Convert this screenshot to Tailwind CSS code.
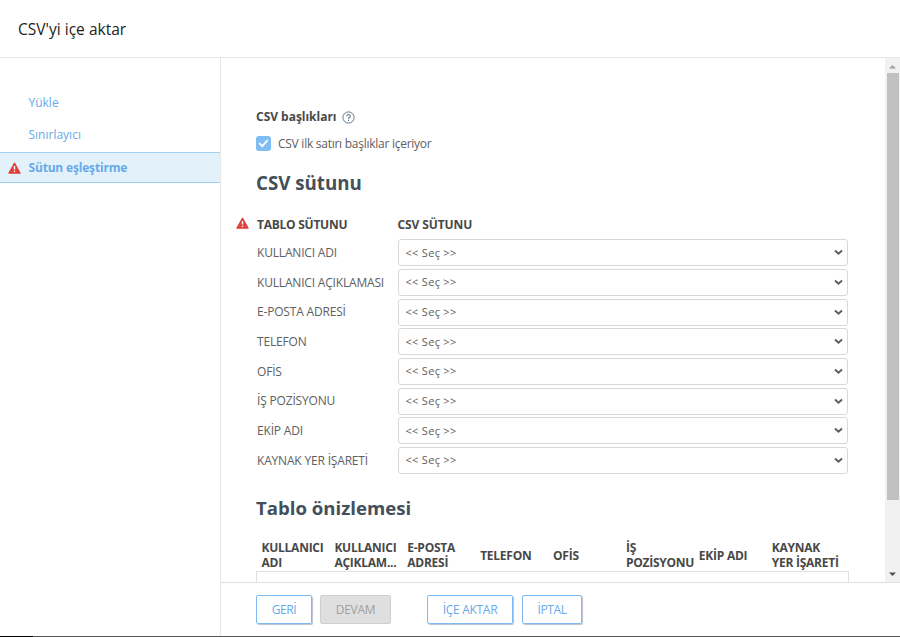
<!DOCTYPE html>
<html lang="tr">
<head>
  <meta charset="UTF-8" />
  <title>CSV'yi içe aktar</title>
  <meta name="viewport" content="width=device-width, initial-scale=1.0" />
  <script src="https://cdn.jsdelivr.net/npm/@tailwindcss/browser@4"></script>
</head>
<body class="h-screen overflow-hidden bg-white font-['Open_Sans','Noto_Sans',sans-serif] text-[12px] text-[#606060] flex flex-col">
  <header class="h-[58px] shrink-0 border-b border-[#e6e6e6] flex items-center pl-[18px]">
    <h1 class="text-[15.5px] leading-5 text-[#222] tracking-[0.02px]">CSV'yi içe aktar</h1>
  </header>

  <div class="flex-1 min-h-0 flex">
    <nav class="w-[221px] shrink-0 border-r border-[#e6e6e6] pt-[29px] text-[#68aae9]">
      <a class="flex items-center h-8 pl-[28.5px]">Yükle</a>
      <a class="flex items-center h-8 pl-[28.5px]">Sınırlayıcı</a>
      <a class="flex items-center h-[31px] mt-px pl-2 border-y border-[#9dd0f2] bg-[#e3f1fa] font-bold">
        <svg class="w-[13px] h-3 mr-[7.5px]" viewBox="0 0 13 12"><path d="M6.5.8 12.3 11.2H.7z" fill="#e0403a" stroke="#e0403a" stroke-linejoin="round" /><path d="M6.5 4v3.4M6.5 8.7v1.4" stroke="#fff" stroke-width="1.4" /></svg>
        <span class="tracking-[-0.18px]">Sütun eşleştirme</span>
      </a>
    </nav>

    <div class="flex-1 min-w-0 flex flex-col">
      <div class="flex-1 min-h-0 flex border-b border-[#e0e0e0]">
        <main class="flex-1 min-w-0 overflow-hidden pl-[35px] pt-[50px]">
          <div class="flex items-center h-[18px] font-bold text-[#484848]">
            <span class="tracking-[-0.02px]">CSV başlıkları</span>
            <svg class="w-[13px] h-[13px] ml-[5px]" viewBox="0 0 13 13" fill="none" stroke="#60758c"><circle cx="6.5" cy="6.5" r="5.6" /><path d="M4.8 5.2c0-2.3 3.5-2.2 3.5-.1 0 1.4-1.8 1.3-1.8 2.6M6.5 8.7v1.2" stroke-width="1.1" /></svg>
          </div>
          <label class="flex items-center h-5 mt-[7px]">
            <svg class="w-[15px] h-[15px] mr-[7px]" viewBox="0 0 15 15"><rect width="15" height="15" rx="3" fill="#80bdf5" /><path d="m3.3 7.2 3 3 5.4-6" fill="none" stroke="#fff" stroke-width="1.8" /></svg>
            <span class="pt-0.5 tracking-[-0.26px]">CSV ilk satırı başlıklar içeriyor</span>
          </label>
          <h2 class="mt-[18px] h-6 leading-6 text-[18.7px] font-bold text-[#434f5a]">CSV sütunu</h2>

          <div class="relative flex items-center h-5 mt-[20px] pl-px font-bold text-[#484848]">
            <svg class="absolute -left-5 top-[2px] w-[13px] h-3" viewBox="0 0 13 12"><path d="M6.5.8 12.3 11.2H.7z" fill="#e0403a" stroke="#e0403a" stroke-linejoin="round" /><path d="M6.5 4v3.4M6.5 8.7v1.4" stroke="#fff" stroke-width="1.4" /></svg>
            <span class="w-[140.5px] tracking-[-0.25px]">TABLO SÜTUNU</span>
            <span class="tracking-[-0.1px]">CSV SÜTUNU</span>
          </div>
          <div id="mapping" class="mt-[3px]"></div>

          <h2 class="mt-[20px] h-6 leading-6 text-[18.6px] font-bold text-[#434f5a]">Tablo önizlemesi</h2>
          <div id="preview" class="flex items-center w-[592px] h-[31px] mt-[20px] pl-[5.5px] font-bold text-[#484848] leading-[15px]"></div>
          <div class="w-[593px] h-10 border border-[#e0e0e0]"></div>
        </main>

        <div class="w-[15px] shrink-0 bg-[#f1f1f1] flex flex-col items-center">
          <svg class="w-[15px] h-[15px] shrink-0" viewBox="0 0 15 15"><path d="M4 10.5 7.5 7l3.500 3.500z" fill="#a3a3a3" /></svg>
          <div class="w-3 h-[427px] bg-[#c1c1c1]"></div>
          <svg class="w-[15px] h-[15px] shrink-0 mt-auto" viewBox="0 0 15 15"><path d="M4 5.500h7L7.500 9z" fill="#505050" /></svg>
        </div>
      </div>

      <footer class="h-[53px] shrink-0 flex items-start pt-3 pl-[35px] text-[#68aae9]">
        <button class="w-[56px] h-[29px] border border-[#7dbaf2] rounded-[2px] shadow-[1px_1px_1px_#b8c4d0] tracking-[-0.4px]">GERİ</button>
        <button class="w-[71px] h-[29px] ml-2 border border-[#cfcfcf] rounded-[2px] bg-[#dfdfdf] text-[#a0a0a0] tracking-[-0.3px]">DEVAM</button>
        <button class="w-[86px] h-[29px] ml-9 border border-[#7dbaf2] rounded-[2px] shadow-[1px_1px_1px_#b8c4d0] tracking-[-0.3px]">İÇE AKTAR</button>
        <button class="w-[60px] h-[29px] ml-[9px] border border-[#7dbaf2] rounded-[2px] shadow-[1px_1px_1px_#b8c4d0] tracking-[-0.4px]">İPTAL</button>
      </footer>
    </div>
  </div>
  <div class="h-px shrink-0 bg-[#555] flex"><div class="w-[33px] bg-black"></div></div>

  <script>
    const fields = ["KULLANICI ADI", "KULLANICI AÇIKLAMASI", "E-POSTA ADRESİ", "TELEFON", "OFİS", "İŞ POZİSYONU", "EKİP ADI", "KAYNAK YER İŞARETİ"];
    const headings = ["KULLANICI<br>ADI", "KULLANICI<br>AÇIKLAM...", "E-POSTA<br>ADRESİ", "TELEFON", "OFİS", "İŞ<br>POZİSYONU", "EKİP ADI", "KAYNAK<br>YER İŞARETİ"];

    document.getElementById("mapping").innerHTML = fields.map((name) => `
      <div class="flex items-center h-[29.7px] pl-px">
        <span class="w-[140.5px] whitespace-nowrap tracking-[-0.18px]">${name}</span>
        <div class="flex items-center justify-between w-[450px] h-[27px] pl-[7px] pr-[4px] border border-[#d9d9d9] rounded-[3px] text-[11px]">
          <span class="tracking-[0.3px]">&lt;&lt; Seç &gt;&gt;</span>
          <svg class="w-[9px] h-[7px]" viewBox="0 0 9 7"><path d="m1 1.5 3.5 3.2L8 1.5" fill="none" stroke="#5c5c5c" stroke-width="1.9" /></svg>
        </div>
      </div>`).join("");

    document.getElementById("preview").innerHTML = headings.map((name) => `
      <div class="w-[72.9px] shrink-0 whitespace-nowrap tracking-[-0.25px]">${name}</div>`).join("");
  </script>
</body>
</html>
